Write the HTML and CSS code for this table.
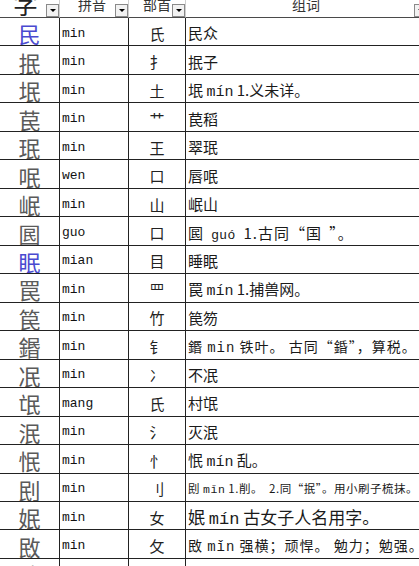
FILE: index.html
```html
<!DOCTYPE html>
<html lang="zh-CN">
<head>
<meta charset="utf-8">
<title>民 部件字表</title>
<link rel="stylesheet" href="styles.css">
</head>
<body>
<div class="sheet">
  <div class="hc h1"><span class="ht big">字</span><span class="dd"></span></div>
  <div class="hc h2"><span class="ht">拼音</span><span class="dd"></span></div>
  <div class="hc h3"><span class="ht">部首</span><span class="dd"></span></div>
  <div class="hc h4"><span class="ht">组词</span><span class="dd"></span></div>

  <div class="c c1 blue">民</div><div class="c c2">min</div><div class="c c3">氏</div><div class="c c4"><span>民众</span></div>
  <div class="c c1">抿</div><div class="c c2">min</div><div class="c c3">扌</div><div class="c c4"><span>抿子</span></div>
  <div class="c c1">垊</div><div class="c c2">min</div><div class="c c3">土</div><div class="c c4"><span>垊 <span class="m">mín</span> 1.义未详。</span></div>
  <div class="c c1">苠</div><div class="c c2">min</div><div class="c c3">艹</div><div class="c c4"><span>苠稻</span></div>
  <div class="c c1">珉</div><div class="c c2">min</div><div class="c c3">王</div><div class="c c4"><span>翠珉</span></div>
  <div class="c c1">呡</div><div class="c c2">wen</div><div class="c c3">口</div><div class="c c4"><span>唇呡</span></div>
  <div class="c c1">岷</div><div class="c c2">min</div><div class="c c3">山</div><div class="c c4"><span>岷山</span></div>
  <div class="c c1">囻</div><div class="c c2">guo</div><div class="c c3">口</div><div class="c c4 wide"><span>囻 <span class="s">guó</span> 1.古同“国 ”。</span></div>
  <div class="c c1 blue">眠</div><div class="c c2">mian</div><div class="c c3">目</div><div class="c c4"><span>睡眠</span></div>
  <div class="c c1">罠</div><div class="c c2">min</div><div class="c c3">罒</div><div class="c c4"><span>罠 <span class="m">mín</span> 1.捕兽网。</span></div>
  <div class="c c1">笢</div><div class="c c2">min</div><div class="c c3">竹</div><div class="c c4"><span>笢笏</span></div>
  <div class="c c1">鍲</div><div class="c c2">min</div><div class="c c3">钅</div><div class="c c4 sm14"><span>鍲 <span class="m">min</span> 铁叶。 古同“錉”，算税。</span></div>
  <div class="c c1">冺</div><div class="c c2">min</div><div class="c c3">冫</div><div class="c c4"><span>不冺</span></div>
  <div class="c c1">氓</div><div class="c c2">mang</div><div class="c c3">氏</div><div class="c c4"><span>村氓</span></div>
  <div class="c c1">泯</div><div class="c c2">min</div><div class="c c3">氵</div><div class="c c4"><span>灭泯</span></div>
  <div class="c c1">怋</div><div class="c c2">min</div><div class="c c3">忄</div><div class="c c4"><span>怋 <span class="m">mín</span> 乱。</span></div>
  <div class="c c1">刡</div><div class="c c2">min</div><div class="c c3">刂</div><div class="c c4 sm11"><span>刡 <span class="m">mǐn</span> 1.削。&nbsp; 2.同“抿”。用小刷子梳抹。</span></div>
  <div class="c c1">姄</div><div class="c c2">min</div><div class="c c3">女</div><div class="c c4 lg17"><span>姄 <span class="m">mín</span> 古女子人名用字。</span></div>
  <div class="c c1">敃</div><div class="c c2">min</div><div class="c c3">攵</div><div class="c c4 sm14"><span>敃 <span class="m">mǐn</span> 强横；顽悍。 勉力；勉强。</span></div>
  <div class="c c1">暋</div><div class="c c2">min</div><div class="c c3">日</div><div class="c c4"><span>暋 <span class="m">mǐn</span> 强横。</span></div>
</div>
</body>
</html>
```

FILE: styles.css
```css
html, body {
  margin: 0;
  padding: 0;
  overflow: hidden;
  background: #ffffff;
}

.sheet {
  display: grid;
  grid-template-columns: 60px 69px 57px 241px;
  grid-template-rows: 29px;
  grid-auto-rows: 28.47px;
  width: 427px;
  margin-top: -11px;
  font-family: "Noto Sans CJK SC", "Noto Sans", sans-serif;
  color: #1a1a1a;
}

.hc, .c {
  box-sizing: border-box;
  border-right: 1px solid #222;
  border-bottom: 1px solid #222;
  overflow: hidden;
  white-space: nowrap;
  display: flex;
}

.h4, .c4 {
  border-right: none;
}

.hc {
  align-items: flex-end;
  border-bottom: 1px solid #4a4a4a;
  border-right-color: #cfcfcf;
}

.ht {
  font-size: 14px;
  line-height: 1;
  color: #333;
  margin-bottom: 6px;
}

.ht.big {
  font-size: 25px;
  margin-bottom: 1px;
  color: #222;
}

.h1 { padding-left: 13px; }
.h2 { padding-left: 18px; }
.h3 { padding-left: 14px; }
.h4 { padding-left: 106px; }

.dd {
  box-sizing: border-box;
  width: 13px;
  height: 13px;
  margin-left: auto;
  border: 1px solid #8a8a8a;
  background: #f2f2f2;
  display: flex;
  align-items: center;
  justify-content: center;
}

.dd::after {
  content: "";
  width: 0;
  height: 0;
  border-left: 3px solid transparent;
  border-right: 3px solid transparent;
  border-top: 3px solid #000;
}

.c {
  align-items: center;
}

.c1 {
  justify-content: center;
  font-size: 22px;
  line-height: 1;
  color: #5a5a5a;
  padding-top: 3px;
}

.c1.blue {
  color: #4a4ad0;
}

.c2 {
  font-family: "Liberation Mono", monospace;
  font-size: 13px;
  padding-left: 2px;
  padding-top: 3px;
  color: #111;
}

.c3 {
  justify-content: center;
  font-size: 15px;
  padding-top: 3px;
  color: #222;
}

.c4 {
  font-size: 15px;
  padding-left: 2px;
  padding-top: 2px;
  color: #1a1a1a;
}

.m {
  font-family: "Liberation Mono", monospace;
}

.s {
  font-family: "Liberation Sans", sans-serif;
  font-size: 13px;
}

.sm14 { font-size: 14px; letter-spacing: 1px; }
.sm11 { font-size: 11.5px; letter-spacing: 0.5px; }
.lg17 { font-size: 17px; }
.wide { letter-spacing: 1px; word-spacing: 3px; }
```
